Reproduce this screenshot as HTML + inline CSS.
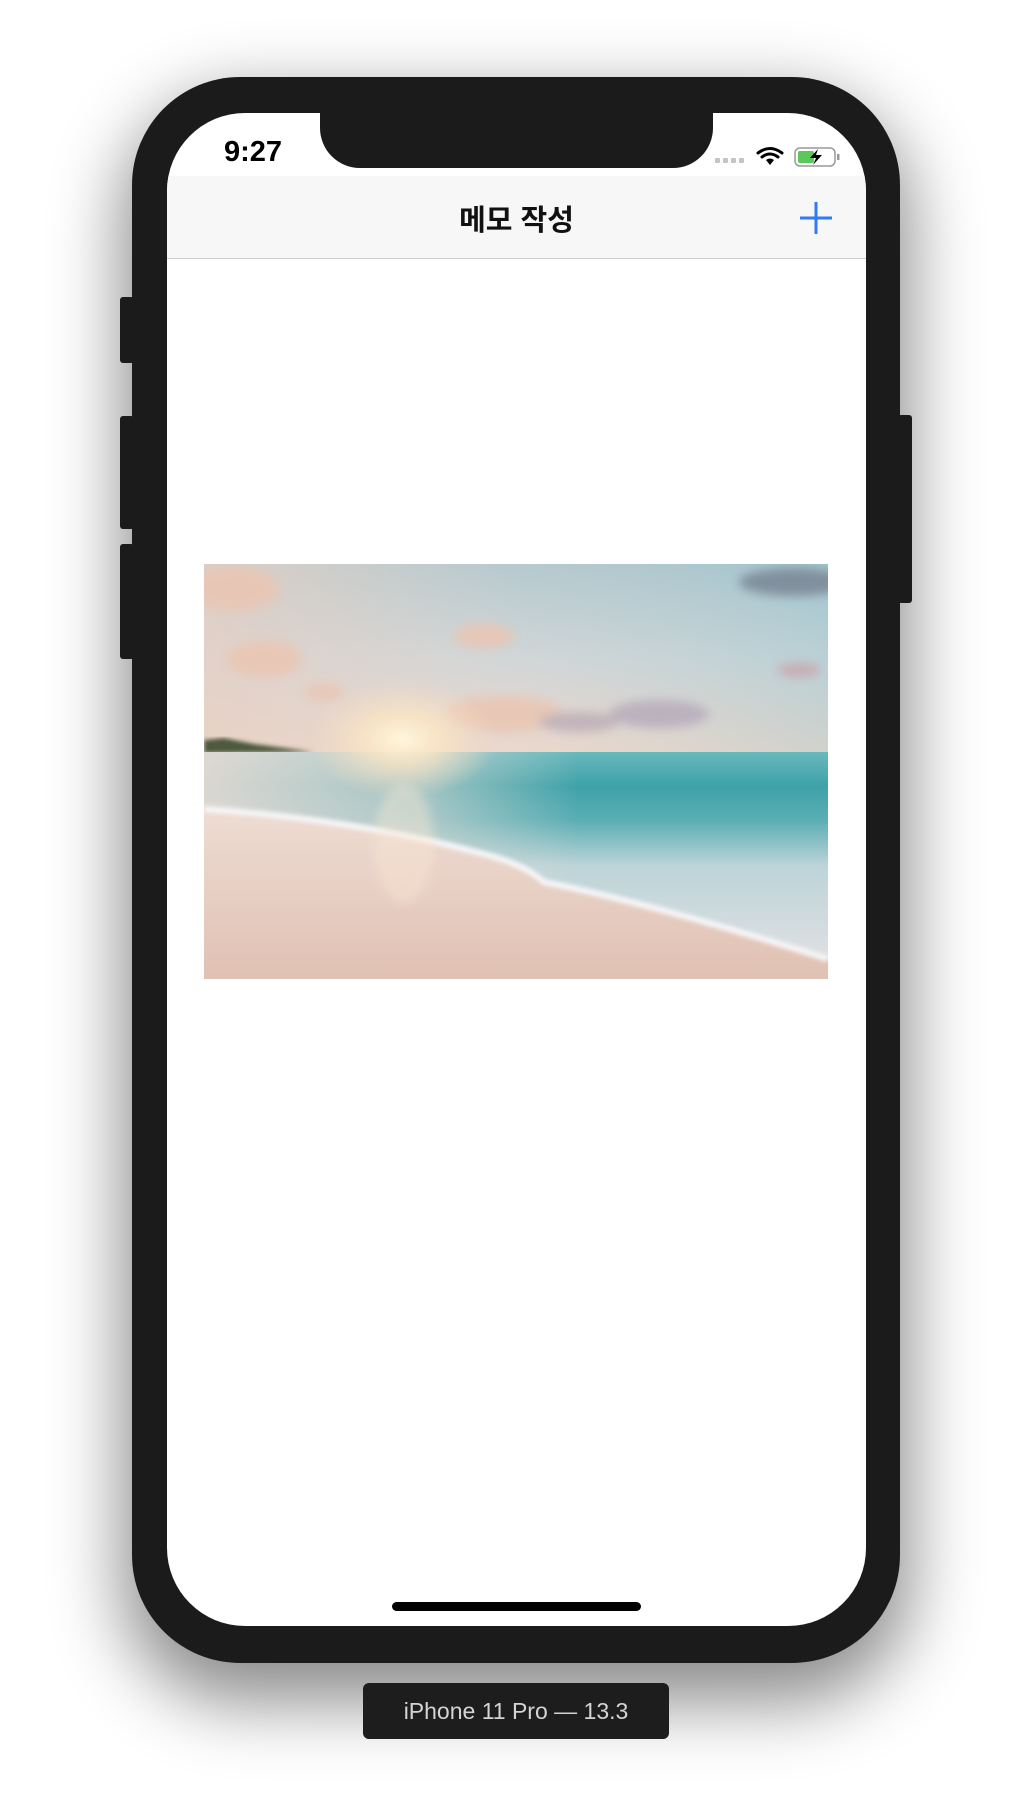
<!DOCTYPE html>
<html><head><meta charset="utf-8"><style>
html,body{margin:0;padding:0;background:#fff;}
body{width:1032px;height:1812px;position:relative;overflow:hidden;font-family:"Liberation Sans","Noto Sans CJK KR",sans-serif;}
.shadow{position:absolute;left:132px;top:77px;width:768px;height:1586px;border-radius:110px;box-shadow:0 30px 70px 10px rgba(0,0,0,0.45);}
.frame{position:absolute;left:132px;top:77px;width:768px;height:1586px;border-radius:108px;background:#1b1b1b;}
.btn{position:absolute;background:#1b1b1b;border-radius:3px;}
.screen{position:absolute;left:167px;top:113px;width:699px;height:1513px;border-radius:78px;background:#fff;overflow:hidden;}
.notch{position:absolute;left:153px;top:-2px;width:393px;height:57px;background:#1b1b1b;border-radius:0 0 40px 40px;}
.nav{position:absolute;left:0;top:63px;width:699px;height:82px;background:#f7f7f7;border-bottom:1px solid #cfcfcf;}
.title{position:absolute;left:0;width:699px;top:21px;text-align:center;font-size:29px;font-weight:bold;color:#111;}
.time{position:absolute;left:57px;top:23px;font-size:29px;font-weight:bold;color:#000;}
.photo{position:absolute;left:37px;top:451px;width:624px;height:415px;overflow:hidden;}
.home{position:absolute;left:225px;top:1489px;width:249px;height:9px;background:#000;border-radius:5px;}
.label{position:absolute;left:363px;top:1683px;width:306px;height:56px;background:#1d1d1d;border-radius:6px;color:#d4d4d4;font-size:23px;text-align:center;line-height:56px;}
</style></head><body>
<div class="shadow"></div>
<div class="btn" style="left:120px;top:297px;width:14px;height:66px"></div>
<div class="btn" style="left:120px;top:416px;width:14px;height:113px"></div>
<div class="btn" style="left:120px;top:544px;width:14px;height:115px"></div>
<div class="btn" style="left:898px;top:415px;width:14px;height:188px"></div>
<div class="frame"></div>
<div class="screen">
  <div class="time">9:27</div>
  <div class="notch"></div>
  <svg style="position:absolute;left:548px;top:32px" width="130" height="24" viewBox="0 0 130 24">
    <g fill="#c4c4c4"><rect x="0" y="13" width="5" height="5" rx="1"/><rect x="8" y="13" width="5" height="5" rx="1"/><rect x="16" y="13" width="5" height="5" rx="1"/><rect x="24" y="13" width="5" height="5" rx="1"/></g>
    <g fill="none" stroke="#000" stroke-width="3" stroke-linecap="round"><path d="M43 8 Q55 -1 67 8"/><path d="M47 12 Q55 6 63 12"/></g>
    <path d="M51 15 L55 20 L59 15 Q55 12 51 15Z" fill="#000"/>
    <rect x="80" y="3" width="40" height="18" rx="5" fill="none" stroke="#999" stroke-width="1.5"/>
    <rect x="83" y="6" width="16" height="12" rx="2" fill="#5cc85a"/>
    <rect x="122" y="9" width="2.5" height="6" fill="#999"/>
    <path d="M103 4 L95 13 L101 13 L98 20 L107 10 L101 10 Z" fill="#000"/>
  </svg>
  <div class="nav">
    <div class="title">메모 작성</div>
    <svg style="position:absolute;left:632px;top:25px" width="34" height="34" viewBox="0 0 34 34"><path d="M17 1V33M1 17H33" stroke="#2f7cf6" stroke-width="3"/></svg>
  </div>
  <div class="photo">
    <svg width="624" height="415" viewBox="0 0 624 415">
      <defs>
        <linearGradient id="sky" x1="0" y1="0" x2="0" y2="1">
          <stop offset="0" stop-color="#a9c6cf"/><stop offset="0.5" stop-color="#ccd6da"/><stop offset="1" stop-color="#ecd8cc"/>
        </linearGradient>
        <linearGradient id="sky2" x1="0" y1="0" x2="1" y2="0">
          <stop offset="0" stop-color="#e8d0c4" stop-opacity="0.8"/><stop offset="0.5" stop-color="#e8d6cc" stop-opacity="0.2"/><stop offset="1" stop-color="#8fc3cc" stop-opacity="0.3"/>
        </linearGradient>
        <linearGradient id="seaV" x1="0" y1="0" x2="0" y2="1">
          <stop offset="0" stop-color="#6ab8bc"/><stop offset="0.15" stop-color="#3ea2a9"/><stop offset="0.3" stop-color="#5aaeb4"/><stop offset="0.5" stop-color="#bcd4d8"/><stop offset="1" stop-color="#e6e2e6"/>
        </linearGradient>
        <linearGradient id="seaH" x1="0" y1="0" x2="1" y2="0">
          <stop offset="0" stop-color="#ebdcd6" stop-opacity="0.9"/><stop offset="0.35" stop-color="#e6dcd6" stop-opacity="0.6"/><stop offset="0.6" stop-color="#e6dcd6" stop-opacity="0"/>
        </linearGradient>
        <linearGradient id="sand" x1="0" y1="0" x2="0" y2="1">
          <stop offset="0" stop-color="#eedcd3"/><stop offset="1" stop-color="#e0c1b3"/>
        </linearGradient>
        <radialGradient id="sun"><stop offset="0" stop-color="#fff6dc"/><stop offset="0.4" stop-color="#fbe6c4" stop-opacity="0.8"/><stop offset="1" stop-color="#f5dcc4" stop-opacity="0"/></radialGradient>
        <filter id="bl"><feGaussianBlur stdDeviation="5"/></filter>
        <filter id="bl2"><feGaussianBlur stdDeviation="2"/></filter>
      </defs>
      <rect width="624" height="190" fill="url(#sky)"/>
      <rect width="624" height="190" fill="url(#sky2)"/>
      <g filter="url(#bl)" fill="#e9c6b4" opacity="0.9">
        <ellipse cx="30" cy="25" rx="45" ry="22"/>
        <ellipse cx="60" cy="95" rx="38" ry="18"/>
        <ellipse cx="280" cy="72" rx="30" ry="12"/>
        <ellipse cx="300" cy="150" rx="60" ry="18"/>
        <ellipse cx="120" cy="128" rx="20" ry="8"/>
        <ellipse cx="455" cy="150" rx="50" ry="14" fill="#b8aebc"/>
        <ellipse cx="375" cy="158" rx="40" ry="10" fill="#c0b0b8"/>
        <ellipse cx="590" cy="18" rx="55" ry="14" fill="#7d8a98"/>
        <ellipse cx="595" cy="106" rx="22" ry="7" fill="#c9a8b0"/>
      </g>
      <path d="M0 176 L20 174 L50 180 L80 184 L110 188 L0 189Z" fill="#4d5a3c" filter="url(#bl2)"/>
      <rect y="188" width="624" height="227" fill="url(#seaV)"/>
      <rect y="188" width="624" height="227" fill="url(#seaH)"/>
      <path d="M0 245 Q150 255 280 290 Q320 300 340 318 Q450 340 624 395 L624 415 L0 415Z" fill="url(#sand)"/>
      <path d="M0 245 Q150 255 280 290 Q320 300 340 318 Q450 340 624 395" fill="none" stroke="#f6f6f8" stroke-width="6" filter="url(#bl2)"/>
      <ellipse cx="198" cy="175" rx="95" ry="60" fill="url(#sun)"/>
      <ellipse cx="200" cy="280" rx="30" ry="60" fill="#fbe9d4" opacity="0.4" filter="url(#bl)"/>
    </svg>
  </div>
  <div class="home"></div>
</div>
<div class="label">iPhone 11 Pro — 13.3</div>
</body></html>
